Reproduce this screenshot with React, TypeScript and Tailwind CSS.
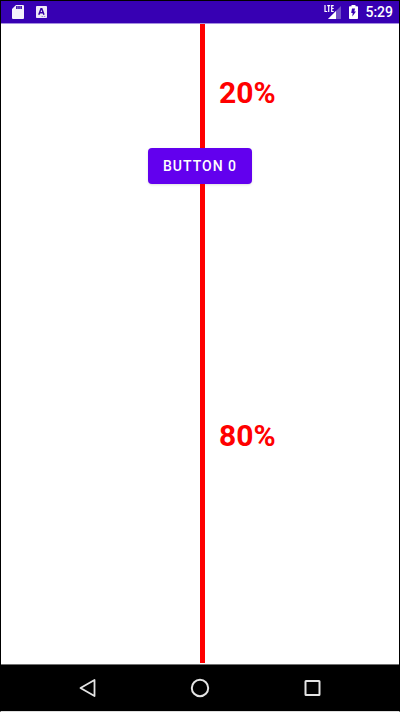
import React from "react";

function SdCardIcon() {
  return (
    <svg width="12" height="14" viewBox="0 0 12 14" aria-hidden="true">
      <path
        fill="#f4f0fb"
        d="M4 0h7a1 1 0 0 1 1 1v12a1 1 0 0 1-1 1H1a1 1 0 0 1-1-1V4z"
      />
      <path fill="#8d70cd" d="M4 1h6v3H4z" />
      <path fill="#4a1cb4" d="M4 1h1.400v3H4zM6.300 1h1.400v3H6.300zM8.600 1H10v3H8.600z" />
    </svg>
  );
}

function KeyboardLetterIcon() {
  return (
    <svg width="11" height="12" viewBox="0 0 11 12" aria-hidden="true">
      <rect width="11" height="12" rx="0.800" fill="#eee8f8" />
      <path d="M2.800 8.800 5 2.800h.8L8 8.800M3.600 6.800h3.600" fill="none" stroke="#3700a5" strokeWidth="1.500" />
      <path d="M5.500 10.500h4" stroke="#a58fd4" strokeWidth="1" strokeDasharray="1.500 .8" />
    </svg>
  );
}

function SignalIcon() {
  return (
    <svg width="18" height="15" viewBox="0 0 18 15" role="img" aria-label="LTE signal">
      <path d="M17 1v13H4z" fill="#7350c8" />
      <path d="M12 6v8H4z" fill="#ffffff" />
      <path d="M0 0h10v7H0z" fill="#3700b3" />
      <path d="M1 0v6.500h2.200M3.200 .6h3M4.700 .5V7M9.700 .6h-2v5.900h2M7.700 3.500h2" fill="none" stroke="#ffffff" strokeWidth="1.200" />
    </svg>
  );
}

function BatteryIcon() {
  return (
    <svg width="9" height="14" viewBox="0 0 9 14" aria-hidden="true">
      <path
        fill="#ffffff"
        fillRule="evenodd"
        d="M2.500 0h4v1.200h1.700a.8.8 0 0 1 .8.8v11.200a.8.8 0 0 1-.8.8H.8a.8.8 0 0 1-.8-.8V2a.8.8 0 0 1 .8-.8h1.700zM3 3.500 2.200 8h1.500l-.4 3.500L7 6.500H5.300l.7-3z"
      />
    </svg>
  );
}

function StatusBar() {
  return (
    <header className="flex h-[23px] items-center justify-between border-b border-[#a58fe0] bg-[#3700b3] pr-[6px] pl-[11px] text-white">
      <div className="flex items-center gap-3">
        <SdCardIcon />
        <KeyboardLetterIcon />
      </div>
      <div className="flex items-center gap-[7px]">
        <SignalIcon />
        <BatteryIcon />
        <time className="text-[14px] leading-5 font-medium">5:29</time>
      </div>
    </header>
  );
}

function Guide({ label, className }: { label: string; className: string }) {
  return (
    <div className={`grid grid-cols-2 ${className}`}>
      <div className="col-start-2 flex items-center border-l-[5px] border-[#ff0000] pl-[14px] text-[30px] leading-9 font-bold text-[#ff0000]">
        {label}
      </div>
    </div>
  );
}

function NavigationBar() {
  const button = "flex h-full w-[112px] items-center justify-center";
  return (
    <nav className="flex h-[47px] items-center justify-center border-t border-[#707070] bg-black">
      <button type="button" aria-label="Back" className={button}>
        <svg width="18" height="20" viewBox="0 0 18 20" aria-hidden="true">
          <path d="M15.500 2v16L1.500 10z" fill="none" stroke="#e4e4e4" strokeWidth="1.800" strokeLinejoin="round" />
        </svg>
      </button>
      <button type="button" aria-label="Home" className={button}>
        <svg width="20" height="20" viewBox="0 0 20 20" aria-hidden="true">
          <circle cx="10" cy="10" r="8.200" fill="none" stroke="#e4e4e4" strokeWidth="2" />
        </svg>
      </button>
      <button type="button" aria-label="Overview" className={button}>
        <svg width="18" height="18" viewBox="0 0 18 18" aria-hidden="true">
          <rect x="2.500" y="2" width="14" height="14" rx="0.500" fill="none" stroke="#e4e4e4" strokeWidth="2" />
        </svg>
      </button>
    </nav>
  );
}

export default function App() {
  return (
    <div className="flex min-h-screen flex-col border border-black border-b-[#dedede] bg-white font-[Roboto,sans-serif]">
      <StatusBar />
      <main className="flex grow flex-col pb-px">
        <Guide label="20%" className="grow basis-1 *:pt-3.5" />
        <button
          type="button"
          className="h-9 self-center rounded bg-[#6200ee] px-[15px] text-[14px] leading-5 font-medium tracking-[1px] text-white shadow-sm"
        >
          BUTTON 0
        </button>
        <Guide label="80%" className="grow-4 basis-0 *:pt-[26px]" />
      </main>
      <NavigationBar />
    </div>
  );
}
